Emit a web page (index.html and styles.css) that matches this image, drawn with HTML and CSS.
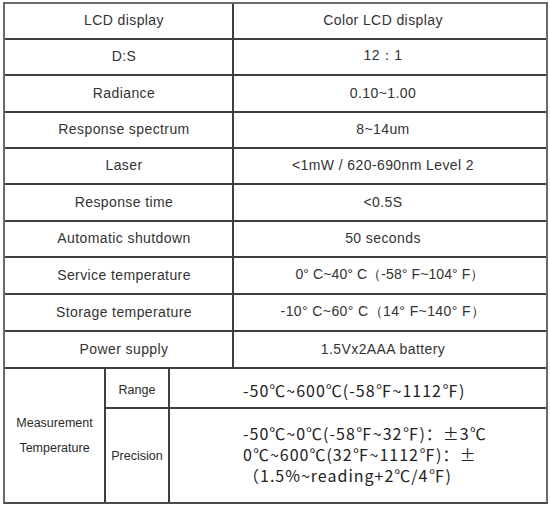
FILE: index.html
```html
<!DOCTYPE html>
<html>
<head>
<meta charset="utf-8">
<link rel="stylesheet" href="styles.css">
</head>
<body>
<div class="spec">
  <div class="cell name">LCD display</div>
  <div class="cell val">Color LCD display</div>
  <div class="cell name">D:S</div>
  <div class="cell val">12：1</div>
  <div class="cell name">Radiance</div>
  <div class="cell val">0.10~1.00</div>
  <div class="cell name">Response spectrum</div>
  <div class="cell val">8~14um</div>
  <div class="cell name">Laser</div>
  <div class="cell val">&lt;1mW / 620-690nm Level 2</div>
  <div class="cell name">Response time</div>
  <div class="cell val">&lt;0.5S</div>
  <div class="cell name">Automatic shutdown</div>
  <div class="cell val">50 seconds</div>
  <div class="cell name">Service temperature</div>
  <div class="cell val shift">0° C~40° C（-58° F~104° F）</div>
  <div class="cell name">Storage temperature</div>
  <div class="cell val">-10° C~60° C（14° F~140° F）</div>
  <div class="cell name">Power supply</div>
  <div class="cell val">1.5Vx2AAA battery</div>
  <div class="cell group">Measurement<br>Temperature</div>
  <div class="cell sub low">Range</div>
  <div class="cell big low">-50℃~600℃(-58℉~1112℉)</div>
  <div class="cell sub">Precision</div>
  <div class="cell big prec">-50℃~0℃(-58℉~32℉)：±3℃<br>0℃~600℃(32℉~1112℉)：±<br>（1.5%~reading+2℃/4℉)</div>
</div>
</body>
</html>
```
FILE: styles.css
```css
html, body {
  margin: 0;
  padding: 0;
  background: #ffffff;
}
.spec {
  box-sizing: border-box;
  width: 545px;
  margin: 2px 0 0 3px;
  display: grid;
  grid-template-columns: 99px 62px 62px 312px;
  grid-template-rows: 34px 34px 35px 34px 34px 35px 34px 35px 35px 35px 38px 93px;
  gap: 2px;
  background: #3e3e3e;
  border: 2px solid #6a6a6a;
  border-bottom-color: #4a4a4a;
  font-family: "Liberation Sans", Arial, sans-serif;
  color: #333333;
}
.cell {
  box-sizing: border-box;
  background: #ffffff;
  display: flex;
  align-items: center;
  justify-content: center;
  text-align: center;
}
.name {
  grid-column: 1 / 4;
  font-size: 14px;
  letter-spacing: 0.4px;
  padding-left: 11px;
  padding-bottom: 2px;
}
.val {
  grid-column: 4 / 5;
  font-size: 14px;
  letter-spacing: 0.4px;
  padding-right: 14px;
  padding-bottom: 2px;
}
.shift {
  padding-right: 0;
  letter-spacing: 0.1px;
}
.group {
  grid-column: 1 / 2;
  grid-row: 11 / 13;
  font-size: 12.5px;
  line-height: 25px;
  color: #2a2a2a;
}
.sub {
  grid-column: 2 / 3;
  font-size: 12.5px;
  color: #2a2a2a;
}
.low {
  padding-top: 4px;
}
.big {
  grid-column: 3 / 5;
  font-family: "Noto Sans CJK SC", "Liberation Sans", sans-serif;
  font-size: 16px;
  letter-spacing: 1px;
  color: #222222;
  justify-content: flex-start;
  text-align: left;
  padding-left: 73px;
}
.prec {
  line-height: 21px;
  padding-bottom: 3px;
}
```
